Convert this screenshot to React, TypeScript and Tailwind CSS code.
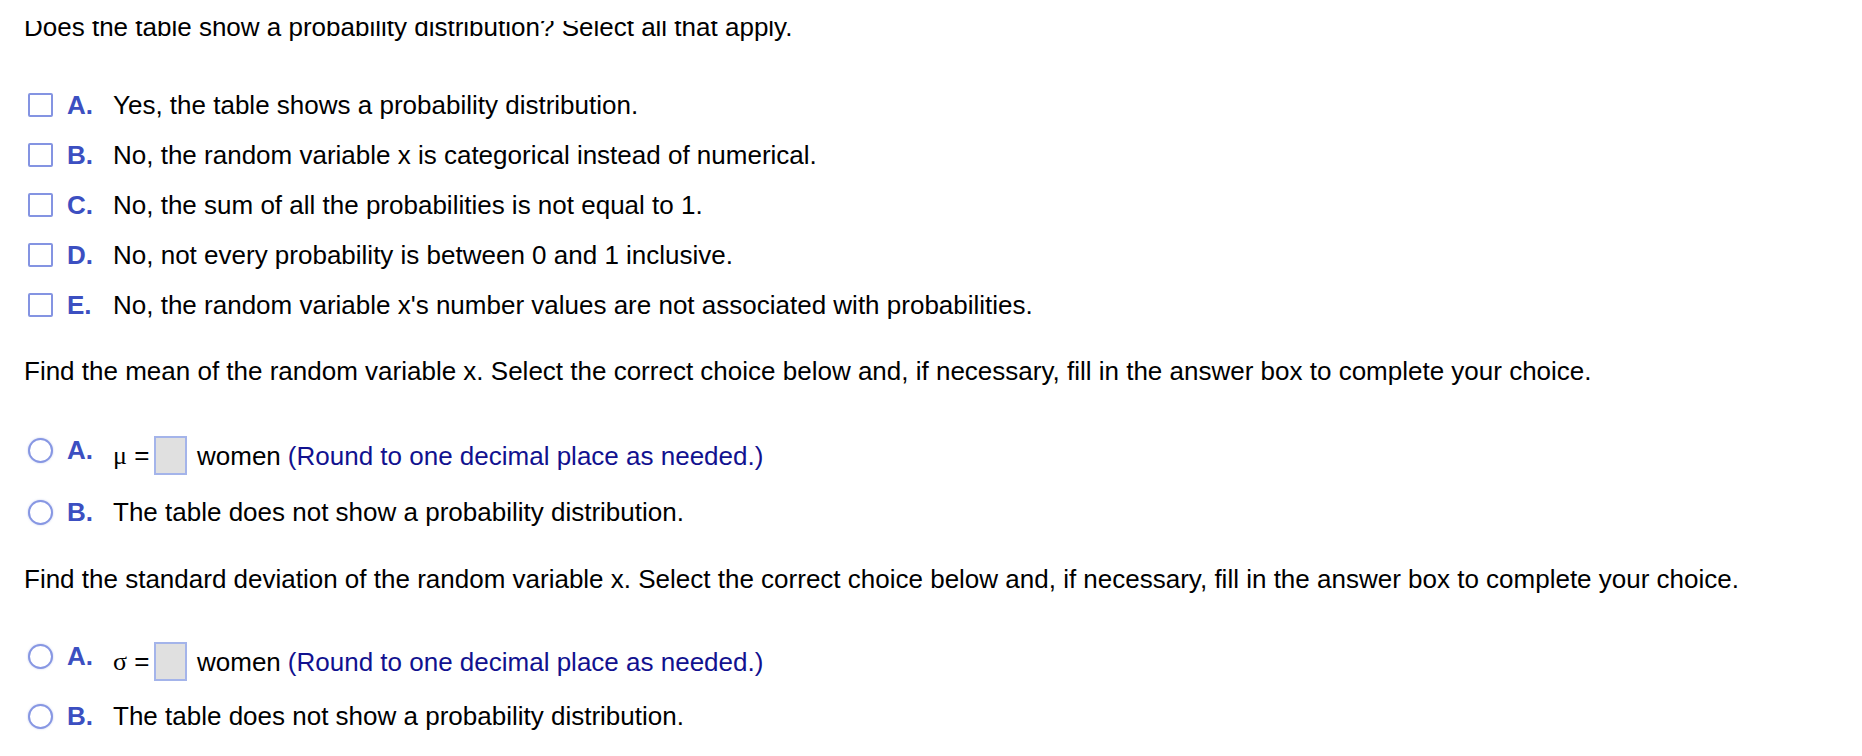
import React from "react";

const checks = [
  { l: "A.", t: "Yes, the table shows a probability distribution." },
  { l: "B.", t: "No, the random variable x is categorical instead of numerical." },
  { l: "C.", t: "No, the sum of all the probabilities is not equal to 1." },
  { l: "D.", t: "No, not every probability is between 0 and 1 inclusive." },
  { l: "E.", t: "No, the random variable x's number values are not associated with probabilities." },
];

function Checkbox() {
  return <span className="ml-[4px] w-[25px] h-[24px] border-2 border-[#8494e2] rounded-[2px] bg-white shrink-0" />;
}

function Radio() {
  return <span className="ml-[4px] w-[25px] h-[25px] rounded-full border-2 border-[#8797e3] bg-white shrink-0 shadow-[0_0_2px_rgba(120,140,220,0.5)]" />;
}

function Letter({ l, className = "" }: { l: string; className?: string }) {
  return <span className={"ml-[14px] w-[46px] font-bold text-[#3c4fc1] leading-[26px] " + className}>{l}</span>;
}

function AnswerRow({ sym }: { sym: string }) {
  return (
    <div className="flex items-start h-[39px]">
      <div className="mt-[2px] flex"><Radio /></div>
      <Letter l="A." className="mt-[1px]" />
      <div className="flex items-center h-[39px] leading-[26px]">
        <span className="w-[41px]">
          <span className="font-['Liberation_Serif',serif]">{sym}</span> =
        </span>
        <span className="w-[33px] h-[39px] bg-[#e0e0e0] border-2 border-[#a4b4ea]" />
        <span className="ml-[10px]">women</span>
        <span className="ml-[7px] text-[#11118f]">(Round to one decimal place as needed.)</span>
      </div>
    </div>
  );
}

function RadioRowB() {
  return (
    <div className="flex items-center h-[50px] leading-[26px]">
      <Radio />
      <Letter l="B." />
      <span>The table does not show a probability distribution.</span>
    </div>
  );
}

export default function App() {
  return (
    <div className="w-full h-[756px] overflow-hidden bg-white text-black text-[26px] pl-[24px] font-['Liberation_Sans',Arial,sans-serif]">
      <div className="mt-[21px] h-[21px] overflow-hidden">
        <div className="-mt-[7px] leading-[26px]">Does the table show a probability distribution? Select all that apply.</div>
      </div>

      <div className="mt-[38px]">
        {checks.map((c) => (
          <div key={c.l} className="flex items-center h-[50px] leading-[26px]">
            <Checkbox />
            <Letter l={c.l} />
            <span>{c.t}</span>
          </div>
        ))}
      </div>

      <p className="mt-[26px] leading-[30px]">
        Find the mean of the random variable x. Select the correct choice below and, if necessary, fill in the answer box to complete your choice.
      </p>
      <div className="mt-[50px]">
        <AnswerRow sym="μ" />
      </div>
      <div className="mt-[12px]">
        <RadioRowB />
      </div>

      <p className="mt-[27px] leading-[30px]">
        Find the standard deviation of the random variable x. Select the correct choice below and, if necessary, fill in the answer box to complete your choice.
      </p>
      <div className="mt-[48px]">
        <AnswerRow sym="σ" />
      </div>
      <div className="mt-[10px]">
        <RadioRowB />
      </div>
    </div>
  );
}
